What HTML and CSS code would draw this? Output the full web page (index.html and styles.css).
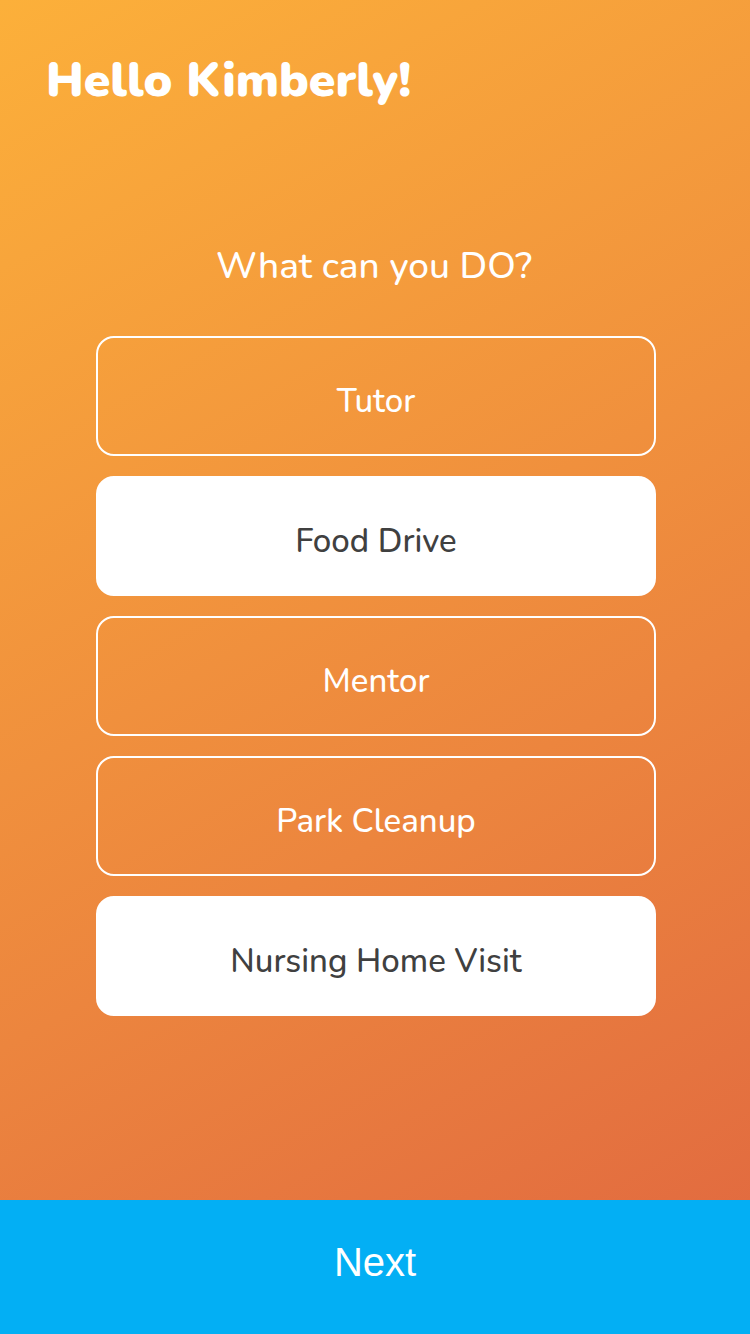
FILE: index.html
```html
<!DOCTYPE html>
<html lang="en">
<head>
<meta charset="utf-8">
<meta name="viewport" content="width=device-width, initial-scale=1">
<title>What can you do?</title>
<link rel="stylesheet" href="styles.css">
</head>
<body>
<form class="screen">
  <main class="content">
    <h1 class="greeting">Hello Kimberly!</h1>
    <fieldset class="choices">
      <legend class="question">What can you DO?</legend>
      <div class="options">
        <button type="button" class="option" aria-pressed="false">Tutor</button>
        <button type="button" class="option option-selected" aria-pressed="true">Food Drive</button>
        <button type="button" class="option" aria-pressed="false">Mentor</button>
        <button type="button" class="option" aria-pressed="false">Park Cleanup</button>
        <button type="button" class="option option-selected" aria-pressed="true">Nursing Home Visit</button>
      </div>
    </fieldset>
  </main>
  <button type="submit" class="next">Next</button>
</form>
</body>
</html>
```

FILE: styles.css
```css
* {
  box-sizing: border-box;
}

body {
  margin: 0;
  font-family: Nunito, Lato, "Noto Sans", sans-serif;
  color: #fff;
}

.screen {
  display: flex;
  flex-direction: column;
  min-height: 100vh;
  background: linear-gradient(151deg, #fcb03a 0%, #ec853e 60%, #e06640 100%);
}

.content {
  flex: 1;
}

.greeting {
  margin: 0;
  padding: 48px 46px 0;
  font-size: 48px;
  line-height: 64px;
  font-weight: 900;
}

.choices {
  margin: 0;
  padding: 0 94px 0 96px;
  border: 0;
}

.question {
  width: 100%;
  padding: 130px 4px 46px 0;
  font-size: 37px;
  line-height: 48px;
  font-weight: 500;
  text-align: center;
}

.options {
  display: flex;
  flex-direction: column;
  gap: 20px;
}

.option {
  min-height: 120px;
  padding: 12px 16px 0;
  border: 2px solid #fff;
  border-radius: 18px;
  background: transparent;
  color: #fff;
  font: inherit;
  font-size: 33px;
  line-height: 40px;
  font-weight: 500;
}

.option-selected {
  background: #fff;
  color: #404040;
}

.next {
  min-height: 134px;
  padding: 0 16px 10px;
  border: 0;
  background: #03aff4;
  color: #fff;
  font-family: "Liberation Sans", sans-serif;
  font-size: 40px;
  line-height: 48px;
}
```
